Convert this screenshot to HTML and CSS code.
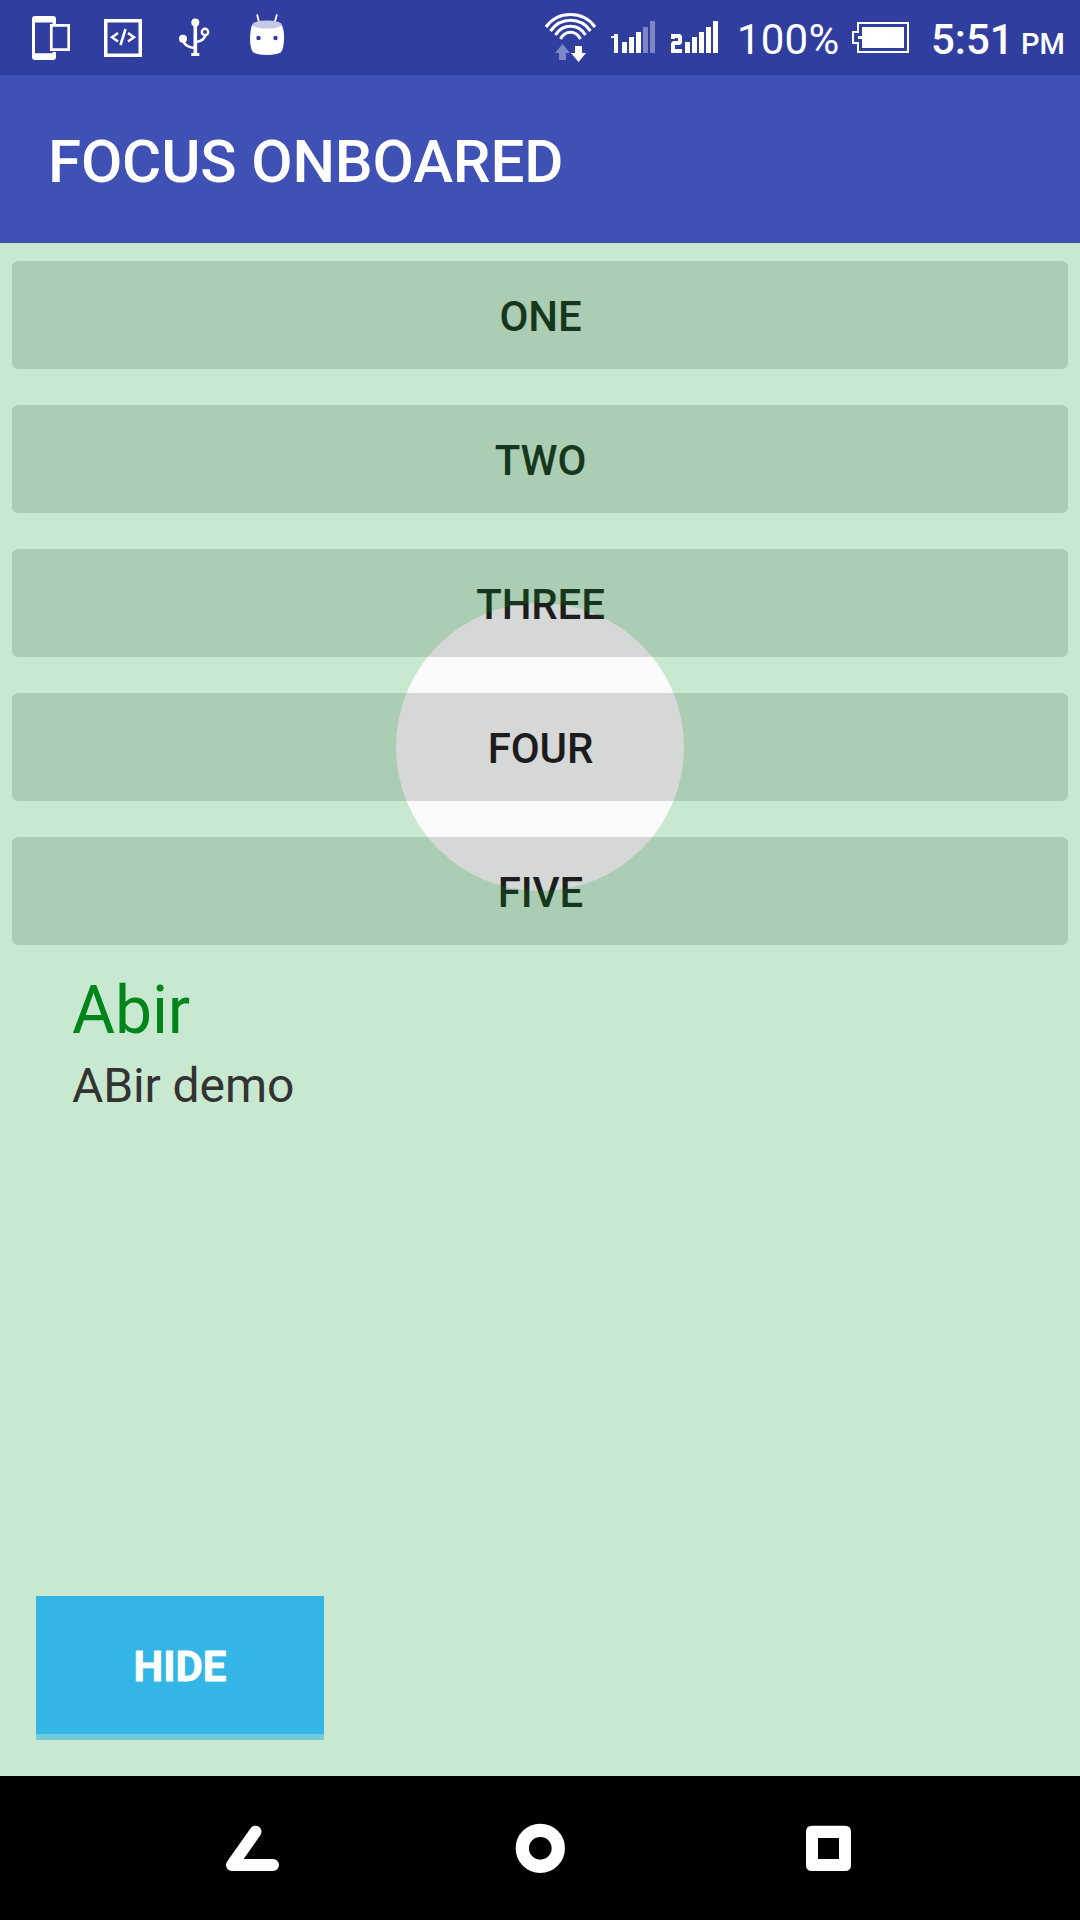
FILE: index.html
```html
<!DOCTYPE html>
<html lang="en">
<head>
<meta charset="utf-8">
<title>Focus Onboared</title>
<link rel="stylesheet" href="styles.css">
</head>
<body>
<div class="screen">
  <header class="status-bar">
    <div class="notifications">
      <svg width="38" height="75" viewBox="32 0 38 75"><path fill="#fff" fill-rule="evenodd" d="M35 16H53Q56 16 56 19V24H52.500V22.500H35V53.300H52.500V52H56V57Q56 60 53 60H35Q32 60 32 57V19Q32 16 35 16Z"/><path fill="none" stroke="#fff" stroke-width="2.700" d="M51.300 25.300H68.700V49.700H51.300Z"/></svg>
      <svg width="38" height="75" viewBox="104 0 38 75"><g fill="none" stroke="#fff"><path stroke-width="3.500" d="M105.750 20.750H140.250V55.250H105.750Z"/><path stroke-width="2.500" d="M118 33L112 37.300L118 41.600M128 33L134 37.300L128 41.600"/><path stroke-width="2.600" d="M125.500 29L120.500 45"/></g></svg>
      <svg width="32" height="75" viewBox="178 0 32 75"><circle cx="195.300" cy="22.500" r="4" fill="#fff"/><circle cx="183" cy="38.800" r="4" fill="#fff"/><g fill="none" stroke="#fff"><path stroke-width="3.600" d="M195.300 23V54"/><path stroke-width="2.700" d="M183 41Q186 47.500 195 48M196 42Q204 41 205.500 35"/><circle cx="205" cy="32" r="3.200" stroke-width="2.400"/><path stroke-width="3" d="M191.300 54.500H199.300"/></g></svg>
      <svg width="36" height="75" viewBox="249 0 36 75"><path stroke="#fff" stroke-width="1.800" stroke-linecap="round" d="M257.200 15L259.200 23M276.800 15L274.500 23"/><path fill="#fff" d="M252 25Q267 31 282 25Q284.500 31 284 40Q283.500 49 281 52.300Q276 55 267 55Q258 55 253 52.300Q250.500 49 250 40Q250 31 252 25Z"/><ellipse cx="267" cy="24.600" rx="14.700" ry="4" fill="#c5c9e6"/><circle cx="258.500" cy="38" r="2.200" fill="#303f9f"/><circle cx="275.500" cy="38" r="2.200" fill="#303f9f"/></svg>
    </div>
    <div class="system">
      <svg class="wifi" width="52" height="75" viewBox="544 0 52 75"><g fill="none" stroke="#fff" stroke-width="3.100"><path d="M546 27Q555 14.500 570.500 14.500T595 27"/><path d="M550.500 31Q558 20.300 570.500 20.300T590.500 31"/><path d="M555.500 35Q561 26.300 570.500 26.300T585.500 35"/><path d="M560.500 39Q564 32.300 570.500 32.300T580.500 39"/></g><path fill="#7e86c3" d="M562.500 44L570 53H566V60H559V53H555Z"/><path fill="#fff" d="M575 46H582V53H586L578.500 62L571 53H575Z"/></svg>
      <svg class="signal-one" width="44" height="75" viewBox="611 0 44 75"><path fill="#fff" d="M614 34H618V53H614V38H611V36H614ZM622 42H627V53H622ZM629 37H634V53H629ZM636 32H641V53H636Z"/><path fill="#7e86c3" d="M643 27H648V53H643ZM650 21H655V53H650Z"/></svg>
      <svg class="signal-two" width="48" height="75" viewBox="670 0 48 75"><path fill="#fff" d="M671 34H680L682 36V43L680 45H675V49H682V53H671V43L673 41H678V38H675V39H671ZM685 42H690V53H685ZM692 37H697V53H692ZM699 32H704V53H699ZM706 27H711V53H706ZM713 21H718V53H713Z"/></svg>
      <span class="charge">100%</span>
      <svg class="battery" width="57" height="75" viewBox="852 0 57 75"><path fill="none" stroke="#fff" stroke-width="2" d="M858 23H908V52H858V43H853V32H858Z"/><path fill="#fff" d="M862 27H904V48H862V39H858V36H862Z"/></svg>
      <span class="clock">5:51</span>
      <span class="meridiem">PM</span>
    </div>
  </header>
  <div class="app-bar"><h1 class="title">FOCUS ONBOARED</h1></div>
  <main class="content">
    <div class="buttons">
      <button class="option">ONE</button>
      <button class="option">TWO</button>
      <button class="option">THREE</button>
      <button class="option">FOUR</button>
      <button class="option">FIVE</button>
    </div>
    <div class="spotlight"></div>
    <section class="guide">
      <h2 class="guide-title">Abir</h2>
      <p class="guide-text">ABir demo</p>
    </section>
    <button class="hide">HIDE</button>
  </main>
  <nav class="nav-bar">
    <svg width="144" height="144" viewBox="180 1776 144 144"><path fill="#fff" stroke="#fff" stroke-width="12" stroke-linecap="round" stroke-linejoin="round" d="M255.500 1831.700L232 1865H273H232Z"/></svg>
    <svg width="144" height="144" viewBox="468 1776 144 144"><circle cx="540.300" cy="1848.300" r="18" fill="none" stroke="#fff" stroke-width="13.300"/></svg>
    <svg width="144" height="144" viewBox="756 1776 144 144"><path fill="#fff" fill-rule="evenodd" d="M812 1825.700H845Q851 1825.700 851 1831.700V1865Q851 1871 845 1871H812Q806 1871 806 1865V1831.700Q806 1825.700 812 1825.700ZM818 1838V1859H839V1838Z"/></svg>
  </nav>
</div>
</body>
</html>
```
FILE: styles.css
```css
* { box-sizing: border-box; }

body {
  margin: 0;
  font-family: Roboto, "Noto Sans", sans-serif;
}

button {
  border: 0;
  font-family: inherit;
}

svg {
  display: block;
  flex: none;
}

.screen {
  width: 1080px;
  height: 1920px;
  display: flex;
  flex-direction: column;
  overflow: hidden;
}

.status-bar {
  height: 75px;
  padding: 0 15px 0 32px;
  display: flex;
  justify-content: space-between;
  background: #303f9f;
  color: #fff;
}

.notifications { display: flex; }
.notifications svg:nth-child(2) { margin-left: 34px; }
.notifications svg:nth-child(3) { margin-left: 36px; }
.notifications svg:nth-child(4) { margin-left: 39px; }

.system {
  display: flex;
  align-items: baseline;
  width: 521px;
  line-height: 80px;
  white-space: nowrap;
}

.system svg { align-self: flex-start; }
.signal-one { margin-left: 15px; }
.signal-two { margin-left: 15px; }

.charge {
  width: 101px;
  margin-left: 19px;
  font-size: 42px;
  letter-spacing: 0.2px;
}

.battery { margin-left: 14px; }

.clock {
  width: 81px;
  margin-left: 22px;
  font-size: 42px;
  font-weight: 500;
}

.meridiem {
  margin-left: 9px;
  font-size: 29px;
  font-weight: 500;
}

.app-bar {
  height: 168px;
  padding: 4px 48px 0;
  display: flex;
  align-items: center;
  background: #3f51b5;
}

.title {
  margin: 0;
  color: #fff;
  font-size: 60px;
  font-weight: 500;
  letter-spacing: -0.14px;
}

.content {
  position: relative;
  height: 1533px;
  display: flex;
  flex-direction: column;
  align-items: flex-start;
  padding: 18px 12px 36px;
  background: #fafafa;
  overflow: hidden;
}

.buttons {
  width: 100%;
  display: flex;
  flex-direction: column;
  gap: 36px;
}

.option {
  height: 108px;
  padding: 3px 0 0 1px;
  border-radius: 6px;
  background: #d6d7d7;
  color: #1c1c1c;
  font-size: 42px;
  font-weight: 500;
  letter-spacing: -0.15px;
}

/* Tinted overlay with a round hole over the focused button */
.spotlight {
  position: absolute;
  top: 360px;
  left: 396px;
  width: 288px;
  height: 288px;
  border-radius: 50%;
  box-shadow: 0 0 0 1800px rgba(2, 164, 34, 0.2);
}

.guide {
  position: relative;
  margin: 27px 0 0 60px;
}

.guide-title {
  margin: 0;
  color: #00851b;
  font-size: 66px;
  font-weight: 400;
  line-height: 77px;
  letter-spacing: -0.1px;
}

.guide-text {
  margin: 0;
  color: #333;
  font-size: 48px;
  line-height: 74px;
  letter-spacing: -0.1px;
}

.hide {
  position: relative;
  width: 288px;
  height: 144px;
  margin: auto 0 0 24px;
  padding: 3px 0 0;
  border-bottom: 6px solid #6fcadc;
  background: #33b5e5;
  color: #fff;
  font-size: 42px;
  font-weight: 700;
  -webkit-text-stroke: 0.8px #fff;
}

.nav-bar {
  height: 144px;
  display: flex;
  justify-content: center;
  gap: 144px;
  background: #000;
}
```
